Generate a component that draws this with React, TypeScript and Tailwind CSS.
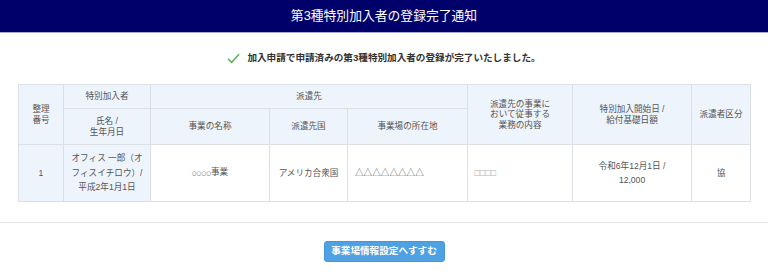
import * as React from "react"

const font = "font-['Liberation_Sans','Noto_Sans_CJK_JP',sans-serif]"

const th = "border border-[#dcdfe4] bg-[#edf4fc] text-center align-middle font-normal leading-[10.5px] text-[#555]"
const td = "border border-[#dcdfe4] align-middle leading-[14.5px] text-[#555]"

export default function App() {
  return (
    <div className={`h-[278px] w-[768px] bg-white ${font}`}>
      <header className="flex h-[33px] items-center justify-center border-b border-[#a9a9d6] bg-[#00006b]">
        <h1 className="text-[12.8px] font-normal text-white">第3種特別加入者の登録完了通知</h1>
      </header>

      <div className="mt-[18px] flex h-[14px] items-center justify-center gap-[7px]">
        <svg width="13" height="11" viewBox="0 0 13 11" fill="none">
          <path d="M1 5.8 L4.6 9.4 L12 1.2" stroke="#4caf50" strokeWidth="1.4" />
        </svg>
        <p className="text-[9.6px] font-bold text-[#333]">
          加入申請で申請済みの第3種特別加入者の登録が完了いたしました。
        </p>
      </div>

      <table className="mx-[18px] mt-[19px] w-[732px] table-fixed border-collapse text-[8.6px]">
        <colgroup>
          <col className="w-[45px]" />
          <col className="w-[87px]" />
          <col className="w-[119px]" />
          <col className="w-[78px]" />
          <col className="w-[120px]" />
          <col className="w-[105px]" />
          <col className="w-[119px]" />
          <col className="w-[59px]" />
        </colgroup>
        <thead>
          <tr className="h-[24px]">
            <th rowSpan={2} className={th}>
              整理
              <br />
              番号
            </th>
            <th className={th}>特別加入者</th>
            <th colSpan={3} className={th}>
              派遣先
            </th>
            <th rowSpan={2} className={th}>
              派遣先の事業に
              <br />
              おいて従事する
              <br />
              業務の内容
            </th>
            <th rowSpan={2} className={th}>
              特別加入開始日 /
              <br />
              給付基礎日額
            </th>
            <th rowSpan={2} className={th}>
              派遣者区分
            </th>
          </tr>
          <tr className="h-[36px]">
            <th className={th}>
              氏名 /
              <br />
              生年月日
            </th>
            <th className={th}>事業の名称</th>
            <th className={th}>派遣先国</th>
            <th className={th}>事業場の所在地</th>
          </tr>
        </thead>
        <tbody>
          <tr className="h-[57px]">
            <td className={`${td} bg-[#edf4fc] text-center`}>1</td>
            <td className={`${td} bg-[#edf4fc] text-center`}>
              オフィス 一郎（オ
              <br />
              フィスイチロウ）/
              <br />
              平成2年1月1日
            </td>
            <td className={`${td} text-center`}>
              <span className="font-['DejaVu_Sans'] text-[5.5px]">○○○○</span>事業
            </td>
            <td className={`${td} text-center`}>アメリカ合衆国</td>
            <td className={`${td} pl-[7px] text-left`}>△△△△△△△△</td>
            <td className={`${td} pl-[6px] text-left`}>
              <span className="font-['Noto_Sans_CJK_JP'] text-[6px] tracking-[-0.5px] text-[#666]">□□□□</span>
            </td>
            <td className={`${td} text-center`}>
              令和6年12月1日 /
              <br />
              12,000
            </td>
            <td className={`${td} text-center`}>協</td>
          </tr>
        </tbody>
      </table>

      <div className="mt-[20px] flex justify-center border-t border-[#e6e6e6] pt-[18px]">
        <button className="flex h-[21px] w-[121px] items-center justify-center rounded-[3px] border border-[#4596d8] bg-[#4ea1e2] text-[9.6px] font-bold text-white">
          事業場情報設定へすすむ
        </button>
      </div>
    </div>
  )
}
